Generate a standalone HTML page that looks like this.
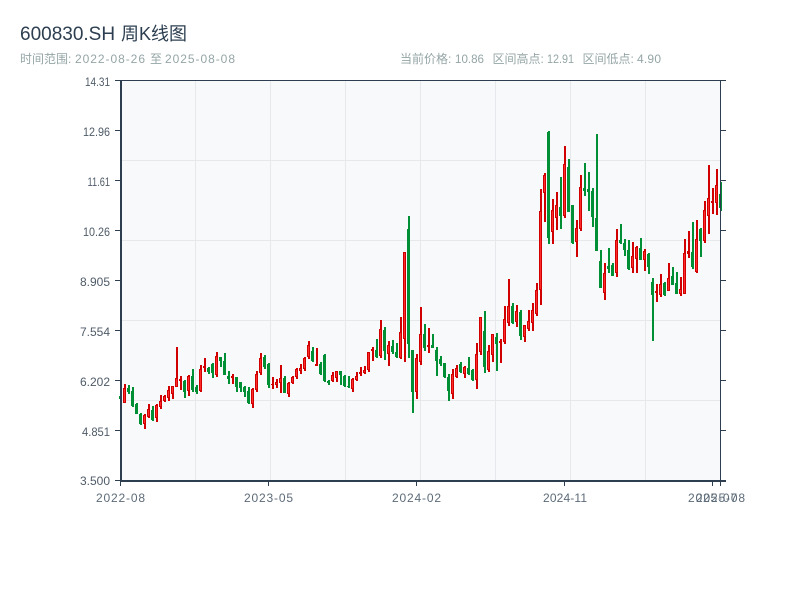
<!DOCTYPE html>
<html lang="zh">
<head>
<meta charset="utf-8">
<title>600830.SH 周K线图</title>
<style>
html,body{margin:0;padding:0;background:#fff;width:800px;height:600px;overflow:hidden}
svg{display:block;position:absolute;left:0;top:0}
text{font-family:"Liberation Sans","Noto Sans CJK SC",sans-serif}
.y{font-size:12px;fill:#4f5b68}
.x{font-size:12px;fill:#5d6b79}
.s{font-size:12px;fill:#95a5a6}
</style>
</head>
<body>
<svg width="800" height="600" viewBox="0 0 800 600" xmlns="http://www.w3.org/2000/svg">
<text x="20" y="40" font-size="19" fill="#2c3e50">600830.SH</text>
<text x="121" y="40" font-size="18" fill="#2c3e50">周K线图</text>
<text class="s" x="20" y="63">时间范围:</text>
<text class="s" x="75" y="63" textLength="70">2022-08-26</text>
<text class="s" x="150" y="63">至</text>
<text class="s" x="165" y="63" textLength="70">2025-08-08</text>
<text class="s" x="400" y="63">当前价格:</text>
<text class="s" x="455" y="63" textLength="29" lengthAdjust="spacingAndGlyphs">10.86</text>
<text class="s" x="492.500" y="63">区间高点:</text>
<text class="s" x="547" y="63" textLength="27" lengthAdjust="spacingAndGlyphs">12.91</text>
<text class="s" x="582.500" y="63">区间低点:</text>
<text class="s" x="637" y="63" textLength="24">4.90</text>

<rect x="120" y="81" width="600" height="400" fill="#f8f9fb"/>
<path fill="#e6e8ec" d="M195 81h1v400h-1zM270 81h1v400h-1zM345 81h1v400h-1zM420 81h1v400h-1zM495 81h1v400h-1zM570 81h1v400h-1zM645 81h1v400h-1zM120 160h600v1h-600zM120 240h600v1h-600zM120 320h600v1h-600zM120 400h600v1h-600z"/>

<path fill="none" stroke="#008f35" stroke-width="2" d="M121 396V399M129 385V394M133 387V407M137 403V414M141 413V425M153 406V421M185 380V398M193 369V392M197 385V394M209 367V374M213 363V378M221 357V367M225 353V375M229 371V384M237 377V392M241 382V392M245 386V397M249 387V404M265 355V369M269 363V388M285 376V393M313 347V362M321 362V375M325 354V382M329 380V385M341 371V385M345 375V387M349 376V388M377 339V358M385 327V360M393 340V354M397 343V358M409 216V358M413 350V413M425 324V351M433 334V348M437 347V376M441 356V366M445 363V378M449 374V401M461 362V373M469 357V375M473 369V381M485 311V373M497 333V371M513 303V324M521 310V340M549 131V244M561 177V229M569 159V212M573 205V244M585 163V196M589 172V211M593 188V227M597 134V251M601 250V288M609 248V273M613 263V276M621 224V244M625 239V256M629 240V270M641 238V260M649 253V274M653 278V341M665 282V296M673 267V285M677 272V294M693 222V269M701 228V257M721 182V211"/>
<path fill="none" stroke="#008f35" stroke-width="3" d="M120.500 396V399M128.500 388V392M132.500 391V406M136.500 404V414M140.500 414V424M152.500 410V420M184.500 381V392M192.500 376V390M196.500 387V392M208.500 368V372M212.500 364V373M220.500 357V361M224.500 361V375M228.500 376V379M236.500 377V387M240.500 382V388M244.500 387V392M248.500 391V403M264.500 357V367M268.500 364V385M284.500 378V393M312.500 351V361M320.500 364V374M324.500 355V381M328.500 381V383M340.500 371V375M344.500 376V386M348.500 386V387M376.500 350V357M384.500 330V351M392.500 346V352M396.500 352V357M408.500 229V344M412.500 350V392M424.500 334V348M432.500 345V348M436.500 350V361M440.500 359V364M444.500 363V377M448.500 377V391M460.500 364V372M468.500 368V374M472.500 370V380M484.500 331V367M496.500 337V344M512.500 306V323M520.500 312V336M548.500 132V238M560.500 207V216M568.500 167V212M572.500 205V243M584.500 188V191M588.500 189V192M592.500 191V217M596.500 218V251M600.500 261V288M608.500 266V269M612.500 265V276M620.500 240V243M624.500 243V250M628.500 250V269M640.500 248V260M648.500 254V267M652.500 282V295M664.500 283V295M672.500 276V285M676.500 283V294M692.500 252V267M700.500 229V241M720.500 194V208"/>

<path fill="none" stroke="#d00000" stroke-width="2" d="M125 384V403M145 414V429M149 404V418M157 404V422M161 395V409M165 395V402M169 386V401M173 386V399M177 347V387M181 376V390M189 375V396M201 365V392M205 358V372M217 352V377M233 374V384M253 388V408M257 371V392M261 353V375M273 377V389M277 379V388M281 365V393M289 382V397M293 376V384M297 368V379M301 364V374M305 357V371M309 341V359M317 348V366M333 372V382M337 371V382M353 378V392M357 372V381M361 367V376M365 366V374M369 352V372M373 347V361M381 320V358M389 341V366M401 317V359M405 252V362M417 354V399M421 307V365M429 328V353M453 369V399M457 365V378M465 366V378M477 343V389M481 317V355M489 345V372M493 334V362M501 339V363M505 306V344M509 279V326M517 305V327M525 325V342M529 310V331M533 303V331M537 283V316M541 189V305M545 173V222M553 199V244M557 192V230M565 146V218M577 220V257M581 175V231M605 263V300M617 229V277M633 242V273M637 246V273M645 249V271M657 284V302M661 274V297M669 263V291M681 277V296M685 239V294M689 231V258M697 220V273M705 201V243M709 165V234M713 188V214M717 169V215"/>
<path fill="none" stroke="#d00000" stroke-width="3" d="M124.500 388V403M144.500 415V424M148.500 409V417M156.500 405V418M160.500 401V407M164.500 396V401M168.500 390V398M172.500 386V394M176.500 378V387M180.500 379V381M188.500 376V391M200.500 369V391M204.500 366V368M216.500 356V375M232.500 376V378M252.500 389V404M256.500 374V390M260.500 358V373M272.500 384V385M276.500 382V385M280.500 378V383M288.500 383V394M292.500 377V383M296.500 369V377M300.500 368V371M304.500 358V369M308.500 345V357M316.500 364V366M332.500 375V381M336.500 371V378M352.500 379V389M356.500 376V380M360.500 372V374M364.500 370V373M368.500 352V370M372.500 349V351M380.500 329V356M388.500 345V354M400.500 332V358M404.500 252V339M416.500 358V392M420.500 334V362M428.500 345V347M452.500 374V394M456.500 368V377M464.500 367V374M476.500 354V380M480.500 317V352M488.500 351V370M492.500 334V355M500.500 341V343M504.500 319V342M508.500 306V323M516.500 311V322M524.500 325V337M528.500 321V329M532.500 310V323M536.500 290V314M540.500 211V290M544.500 175V193M552.500 210V232M556.500 205V218M564.500 164V216M576.500 228V242M580.500 187V229M604.500 273V293M616.500 240V273M632.500 256V268M636.500 247V259M644.500 251V260M656.500 291V293M660.500 284V295M668.500 278V291M680.500 289V294M684.500 253V294M688.500 251V254M696.500 239V272M704.500 210V241M708.500 198V216M712.500 201V203M716.500 185V203"/>
<path fill="none" stroke="#ff2a2a" stroke-width="1" d="M124.500 389V402M144.500 416V423M148.500 410V416M156.500 406V417M160.500 402V406M164.500 397V400M168.500 391V397M172.500 387V393M176.500 379V386M188.500 377V390M200.500 370V390M216.500 357V374M252.500 390V403M256.500 375V389M260.500 359V372M276.500 383V384M280.500 379V382M288.500 384V393M292.500 378V382M296.500 370V376M300.500 369V370M304.500 359V368M308.500 346V356M332.500 376V380M336.500 372V377M352.500 380V388M356.500 377V379M364.500 371V372M368.500 353V369M380.500 330V355M388.500 346V353M400.500 333V357M404.500 253V338M416.500 359V391M420.500 335V361M452.500 375V393M456.500 369V376M464.500 368V373M476.500 355V379M480.500 318V351M488.500 352V369M492.500 335V354M504.500 320V341M508.500 307V322M516.500 312V321M524.500 326V336M528.500 322V328M532.500 311V322M536.500 291V313M540.500 212V289M544.500 176V192M552.500 211V231M556.500 206V217M564.500 165V215M576.500 229V241M580.500 188V228M604.500 274V292M616.500 241V272M632.500 257V267M636.500 248V258M644.500 252V259M660.500 285V294M668.500 279V290M680.500 290V293M684.500 254V293M696.500 240V271M704.500 211V240M708.500 199V215M716.500 186V202"/>

<path fill="#2c3e50" d="M120 80h606v1h-606zM120 80h2v402h-2zM120 480h606v2h-606zM720 80h1v400h-1zM115 80h5v1h-5zM115 130h5v1h-5zM115 180h5v1h-5zM115 230h5v1h-5zM115 280h5v1h-5zM115 330h5v1h-5zM115 380h5v1h-5zM115 430h5v1h-5zM115 480h5v1h-5zM721 130h5v1h-5zM721 180h5v1h-5zM721 230h5v1h-5zM721 280h5v1h-5zM721 330h5v1h-5zM721 380h5v1h-5zM721 430h5v1h-5zM120 482h1v4h-1zM268 482h1v4h-1zM416 482h1v4h-1zM564 482h1v4h-1zM712 482h1v4h-1zM720 482h1v4h-1z"/>

<text class="y" x="85" y="86" textLength="25" lengthAdjust="spacingAndGlyphs">14.31</text>
<text class="y" x="83" y="136" textLength="27" lengthAdjust="spacingAndGlyphs">12.96</text>
<text class="y" x="87.500" y="186" textLength="22.500" lengthAdjust="spacingAndGlyphs">11.61</text>
<text class="y" x="83" y="236" textLength="27" lengthAdjust="spacingAndGlyphs">10.26</text>
<text class="y" x="80" y="286">8.905</text>
<text class="y" x="80" y="336">7.554</text>
<text class="y" x="80" y="386">6.202</text>
<text class="y" x="82" y="436" textLength="28" lengthAdjust="spacingAndGlyphs">4.851</text>
<text class="y" x="80" y="485">3.500</text>

<text class="x" x="96" y="502" textLength="49">2022-08</text>
<text class="x" x="244" y="502" textLength="49">2023-05</text>
<text class="x" x="392" y="502" textLength="49">2024-02</text>
<text class="x" x="543" y="502" textLength="44">2024-11</text>
<text class="x" x="688" y="502" textLength="49">2025-07</text>
<text class="x" x="696" y="502" textLength="49">2025-08</text>
</svg>
</body>
</html>
